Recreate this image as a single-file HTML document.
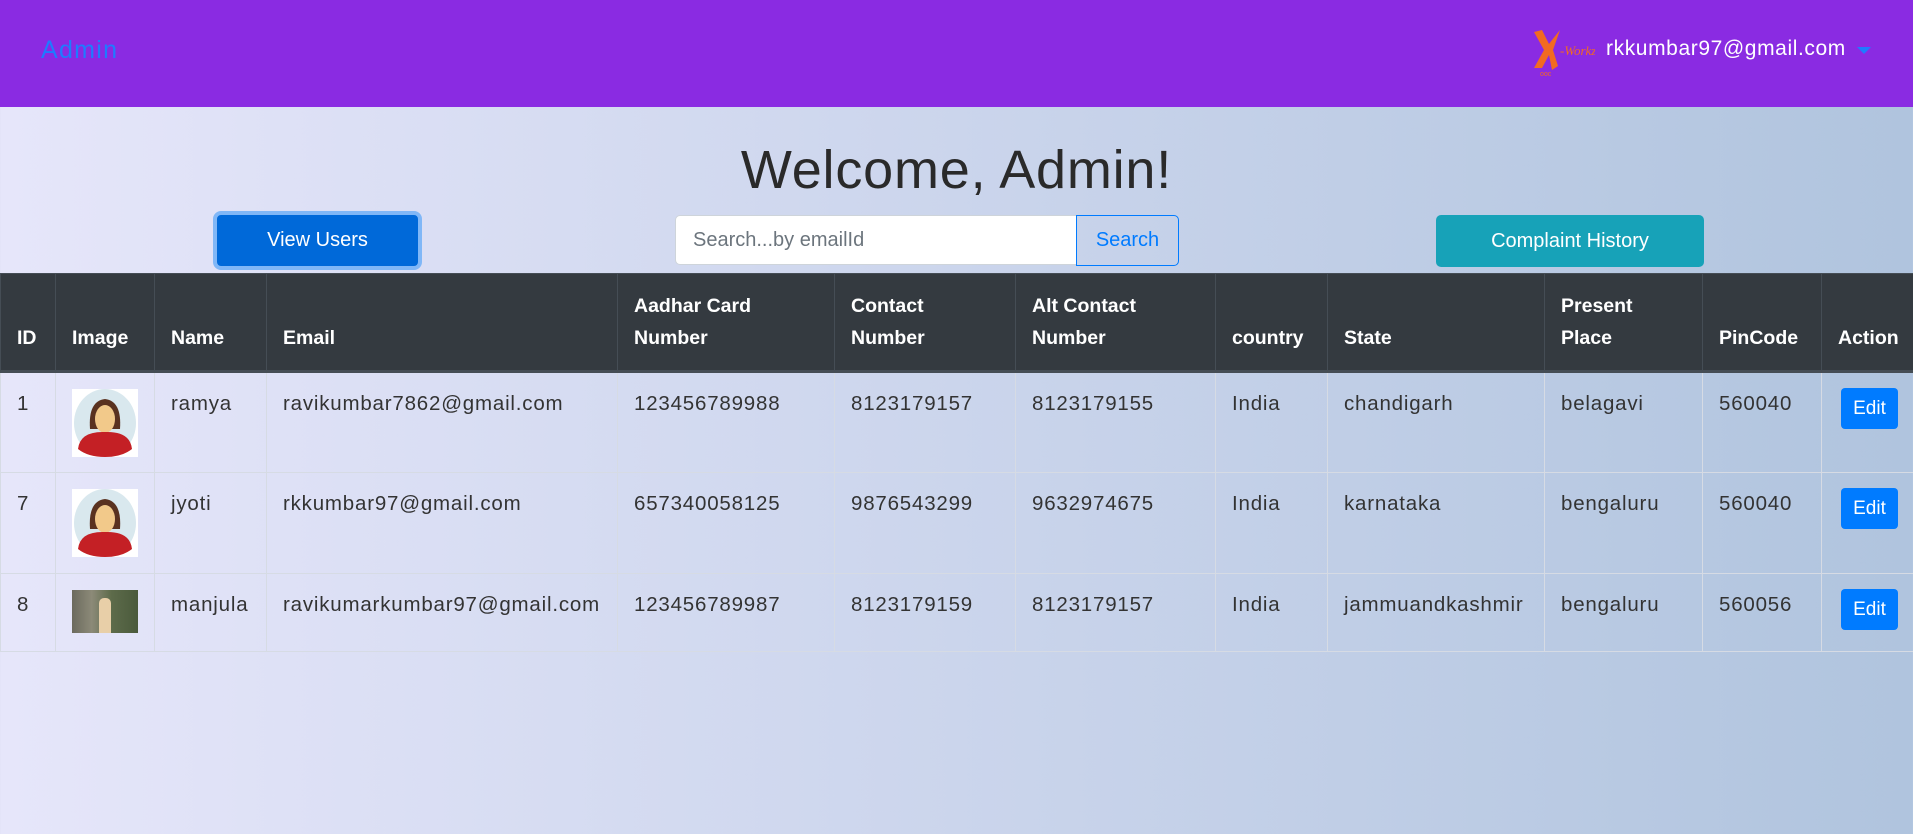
<!DOCTYPE html>
<html><head><meta charset="utf-8"><style>
*{box-sizing:border-box;margin:0;padding:0}
body{width:1913px;height:834px;overflow:hidden;font-family:"Liberation Sans",sans-serif;background:linear-gradient(to right,#e6e6fa,#b0c4de);position:relative;color:#212529}
.nav{position:absolute;left:0;top:0;width:1913px;height:107px;background:#8a2be2}
.brand{position:absolute;left:41px;top:36px;font-size:25px;color:#1e7bff;letter-spacing:1.3px}
.user{position:absolute;left:1606px;top:37px;font-size:21px;color:#fff;letter-spacing:0.6px}
.caret{position:absolute;left:1857px;top:47px;width:0;height:0;border-left:7px solid transparent;border-right:7px solid transparent;border-top:7px solid #1e7bff}
h1{position:absolute;left:0;width:1913px;top:139px;text-align:center;font-weight:300;font-size:54px;color:#2a2a2a;letter-spacing:0.8px}
.btn{position:absolute;color:#fff;font-size:20px;text-align:center;border-radius:5px}
table{position:absolute;left:0;top:273px;width:1913px;border-collapse:collapse;table-layout:fixed;font-size:19.5px}
th{background:#343a40;color:#fff;text-align:left;vertical-align:bottom;padding:14px 15px 16px 16px;line-height:32px;border:1px solid #454d55;border-bottom:3px solid #454d55;height:98px}
td{vertical-align:top;padding:16px 10px 10px 16px;line-height:29px;border:1px solid #d6dbe4;color:#333;font-size:20.5px;letter-spacing:0.8px;white-space:nowrap}
.av{width:66px;height:68px;background:#fff;position:relative;overflow:hidden}
.edit{display:inline-block;background:#007bff;color:#fff;font-size:19px;width:57px;height:41px;line-height:41px;text-align:center;border-radius:4px;margin-top:-1px;margin-left:3px;letter-spacing:0}
</style></head><body>
<div class="nav">
<div class="brand">Admin</div>
<svg style="position:absolute;left:1530px;top:22px" width="65" height="56" viewBox="0 0 65 56"><path d="M4 10 L14 28 L4 46 L12 46 L19 33 L22 48 L28 44 L23 28 L30 8 L22 18 L19 22 L12 8 Z" fill="#f26a21"/><text x="30" y="33" font-size="13" fill="#f26a21" font-style="italic" font-family="Liberation Serif,serif">-Workz</text><text x="10" y="54" font-size="7" fill="#f26a21">ooc</text></svg>
<div class="user">rkkumbar97@gmail.com</div>
<div class="caret"></div>
</div>
<h1>Welcome, Admin!</h1>
<div class="btn" style="left:213px;top:211px;width:209px;height:59px;border:4px solid #80b7f7;border-radius:8px;background:#0069d9;line-height:51px">View Users</div>
<div style="position:absolute;left:675px;top:215px;width:402px;height:50px;background:#fff;border:1px solid #ced4da;border-radius:5px 0 0 5px;font-size:20px;color:#6c757d;line-height:48px;padding-left:17px">Search...by emailId</div>
<div style="position:absolute;left:1076px;top:215px;width:103px;height:51px;border:1px solid #007bff;border-radius:0 5px 5px 0;color:#007bff;font-size:20px;line-height:49px;text-align:center">Search</div>
<div class="btn" style="left:1436px;top:215px;width:268px;height:52px;background:#17a2b8;line-height:52px">Complaint History</div>
<table>
<colgroup><col style="width:55px"><col style="width:99px"><col style="width:112px"><col style="width:351px"><col style="width:217px"><col style="width:181px"><col style="width:200px"><col style="width:112px"><col style="width:217px"><col style="width:158px"><col style="width:119px"><col style="width:92px"></colgroup>
<tr><th>ID</th><th>Image</th><th>Name</th><th>Email</th><th>Aadhar Card Number</th><th>Contact Number</th><th>Alt Contact Number</th><th>country</th><th>State</th><th>Present Place</th><th>PinCode</th><th>Action</th></tr>
<tr style="height:101px"><td>1</td><td><div class="av"><svg width="66" height="68" viewBox="0 0 66 68"><ellipse cx="33" cy="34" rx="31" ry="34" fill="#d9e8ee"/><path d="M18 40 Q16 12 33 10 Q50 12 48 40 Z" fill="#5a3220"/><ellipse cx="33" cy="30" rx="10" ry="14" fill="#f2c98a"/><path d="M6 60 Q8 42 33 43 Q58 42 60 60 Q50 68 33 68 Q16 68 6 60Z" fill="#c42025"/></svg></div></td><td>ramya</td><td>ravikumbar7862@gmail.com</td><td>123456789988</td><td>8123179157</td><td>8123179155</td><td>India</td><td>chandigarh</td><td>belagavi</td><td>560040</td><td><span class="edit">Edit</span></td></tr>
<tr style="height:101px"><td>7</td><td><div class="av"><svg width="66" height="68" viewBox="0 0 66 68"><ellipse cx="33" cy="34" rx="31" ry="34" fill="#d9e8ee"/><path d="M18 40 Q16 12 33 10 Q50 12 48 40 Z" fill="#5a3220"/><ellipse cx="33" cy="30" rx="10" ry="14" fill="#f2c98a"/><path d="M6 60 Q8 42 33 43 Q58 42 60 60 Q50 68 33 68 Q16 68 6 60Z" fill="#c42025"/></svg></div></td><td>jyoti</td><td>rkkumbar97@gmail.com</td><td>657340058125</td><td>9876543299</td><td>9632974675</td><td>India</td><td>karnataka</td><td>bengaluru</td><td>560040</td><td><span class="edit">Edit</span></td></tr>
<tr style="height:78px"><td>8</td><td><div style="width:66px;height:43px;background:linear-gradient(90deg,#6b6a5e,#8c8a78 30%,#5d6b4a 60%,#4a5a3c);position:relative"><div style="position:absolute;left:27px;top:8px;width:12px;height:35px;background:#e8cfa8;border-radius:5px 5px 0 0"></div></div></td><td>manjula</td><td>ravikumarkumbar97@gmail.com</td><td>123456789987</td><td>8123179159</td><td>8123179157</td><td>India</td><td>jammuandkashmir</td><td>bengaluru</td><td>560056</td><td><span class="edit">Edit</span></td></tr>
</table>
</body></html>
